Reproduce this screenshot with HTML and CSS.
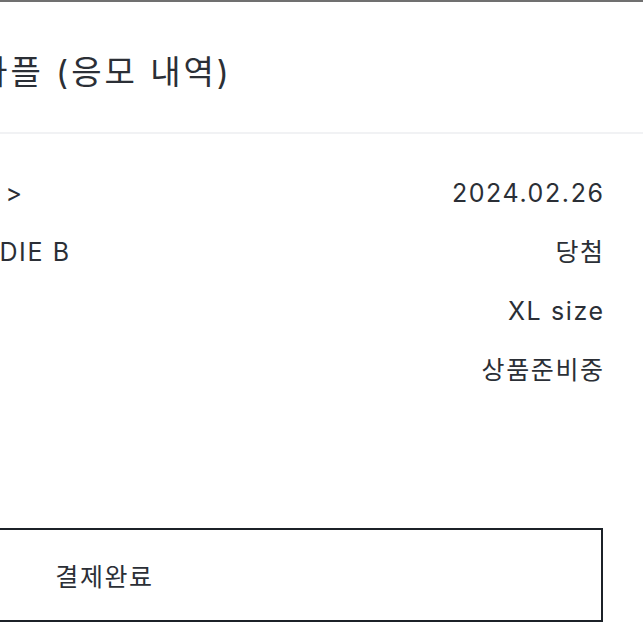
FILE: index.html
```html
<!DOCTYPE html>
<html lang="ko">
<head>
    <meta charset="UTF-8">
    <meta name="viewport" content="width=device-width, initial-scale=1.0">
    <title>라플 (응모 내역)</title>
    <link rel="stylesheet" href="styles.css">
</head>
<body>
    <div class="topbar"></div>

    <header class="header">
        <div class="inner">
            <h1 class="title">라플 (응모 내역)</h1>
        </div>
    </header>

    <main class="inner">
        <div class="entry-list">
            <div class="entry-row">
                <span class="entry-label">응모일</span>
                <a class="entry-link" href="#">상품 상세 보기 &gt;</a>
                <span class="entry-value">2024.02.26</span>
            </div>
            <div class="entry-row">
                <span class="entry-label">결과</span>
                <span class="entry-link">CREAM HOODIE B</span>
                <span class="entry-value">당첨</span>
            </div>
            <div class="entry-row">
                <span class="entry-label">옵션</span>
                <span class="entry-link"></span>
                <span class="entry-value">XL size</span>
            </div>
            <div class="entry-row">
                <span class="entry-label">상태</span>
                <span class="entry-link"></span>
                <span class="entry-value">상품준비중</span>
            </div>
        </div>

        <button class="pay-button">결제완료</button>
    </main>
</body>
</html>
```

FILE: styles.css
```css
body {
    font-family: Inter, "Noto Sans CJK KR", sans-serif;
    margin: 0;
    padding: 0;
    background: #ffffff;
    color: #2b2f36;
    overflow-x: hidden;
}

.topbar {
    height: 2px;
    background: #707070;
}

.header {
    height: 130px;
    border-bottom: 2px solid #f1f2f4;
}

.inner {
    width: 997px;
    margin-left: -394px;
}

.title {
    margin: 0;
    padding-top: 10px;
    font-size: 33px;
    font-weight: 400;
    letter-spacing: 3px;
    line-height: 120px;
    text-align: center;
}

.entry-list {
    padding-top: 30px;
}

.entry-row {
    display: flex;
    align-items: center;
    height: 59px;
    font-size: 25px;
    letter-spacing: 1.6px;
    line-height: 59px;
}

.entry-label {
    width: 226px;
}

.entry-link {
    flex: 1;
    color: inherit;
    text-decoration: none;
    white-space: nowrap;
}

.entry-value {
    text-align: right;
    margin-right: -1.6px;
}

.pay-button {
    display: block;
    box-sizing: border-box;
    width: 100%;
    height: 94px;
    margin-top: 128px;
    background: #ffffff;
    border: 2px solid #1c2128;
    border-radius: 0;
    font-family: inherit;
    font-size: 25px;
    letter-spacing: 1.6px;
    color: #2b2f36;
    cursor: pointer;
}
```
